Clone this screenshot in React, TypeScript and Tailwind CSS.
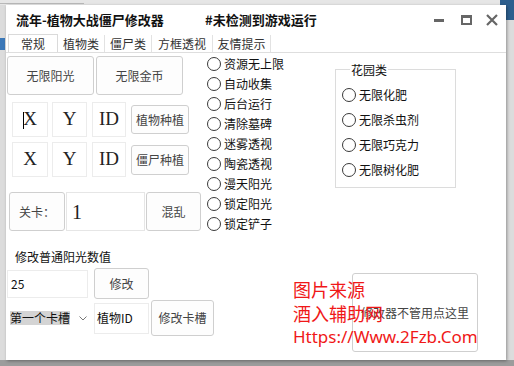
import React from "react";

const cjk = { fontFamily: '"Noto Sans CJK SC", "Noto Sans", sans-serif' };

function Btn({ children, className = "" }: { children: React.ReactNode; className?: string }) {
  return (
    <div
      className={
        "flex shrink-0 items-center justify-center rounded-[3px] border border-[#cfcfcf] bg-[#fdfdfd] text-[12px] text-[#444] " +
        className
      }
    >
      {children}
    </div>
  );
}

function Box({ children, className = "" }: { children: React.ReactNode; className?: string }) {
  return (
    <div
      className={"flex shrink-0 items-center justify-center border border-[#ececec] bg-white text-[19px] text-[#222] " + className}
      style={{ fontFamily: '"Liberation Serif", serif' }}
    >
      {children}
    </div>
  );
}

function Radio({ label, h = 20 }: { label: string; h?: number }) {
  return (
    <div className="flex items-center gap-[3px]" style={{ height: h }}>
      <div className="h-[14px] w-[14px] rounded-full border border-[#3a3a3a] bg-white" />
      <span className="text-[12px] leading-none text-[#111]">{label}</span>
    </div>
  );
}

export default function App() {
  const radios = ["资源无上限", "自动收集", "后台运行", "清除墓碑", "迷雾透视", "陶瓷透视", "漫天阳光", "锁定阳光", "锁定铲子"];
  const garden = ["无限化肥", "无限杀虫剂", "无限巧克力", "无限树化肥"];
  return (
    <div className="relative h-[366px] w-[514px] overflow-hidden bg-[#dcdcdc]" style={cjk}>
      {/* background bits */}
      <div className="absolute left-0 top-0 h-[5px] w-[514px] bg-[#e6e6e6]" />
      <div className="absolute left-0 top-[3px] h-[1px] w-[84px] bg-[#b8b8b8]" />
      <div className="absolute right-0 top-0 h-[20px] w-[14px] bg-[#2d5f8e]" />
      <div className="absolute left-0 top-[38px] h-[12px] w-[5px] bg-[#3b78b8]" />
      <div className="absolute bottom-0 left-0 h-[6px] w-[514px] bg-[#9c9c9c]" />

      <div className="ml-[6px] pt-[5px]">
        <div className="relative flex h-[355px] w-[500px] flex-col bg-white shadow-[1px_1px_3px_rgba(0,0,0,0.35)]">
          {/* title bar */}
          <div className="flex h-[30px] items-center pl-[10px]">
            <div className="w-[189px] text-[13px] font-bold text-[#111]">流年-植物大战僵尸修改器</div>
            <div className="text-[13px] font-bold text-[#111]">#未检测到游戏运行</div>
            <div className="ml-auto flex items-center pr-[8px]">
              <div className="h-[3px] w-[10px] bg-[#666]" />
              <div className="ml-[17px] h-[10px] w-[11px] border-[2px] border-[#666] border-t-[3px]" />
              <svg className="ml-[14px]" width="12" height="12" viewBox="0 0 12 12">
                <path d="M1 1 L11 11 M11 1 L1 11" stroke="#666" strokeWidth="2.2" />
              </svg>
            </div>
          </div>

          {/* tabs */}
          <div className="flex h-[18px] items-end border-b border-[#dedede] pl-[2px] text-[12px] text-[#333]">
            <div className="flex h-[18px] w-[50px] items-center justify-center border border-b-0 border-[#dadada] bg-white">常规</div>
            <div className="flex h-[17px] w-[47px] items-center justify-center border-r border-[#e2e2e2]">植物类</div>
            <div className="flex h-[17px] w-[47px] items-center justify-center border-r border-[#e2e2e2]">僵尸类</div>
            <div className="flex h-[17px] w-[61px] items-center justify-center border-r border-[#e2e2e2]">方框透视</div>
            <div className="flex h-[17px] w-[58px] items-center justify-center border-r border-[#e2e2e2]">友情提示</div>
          </div>

          {/* content */}
          <div className="flex flex-1">
            {/* left column */}
            <div className="w-[201px] shrink-0 pl-[1px] pt-[3px]">
              <div className="flex gap-[2px]">
                <Btn className="h-[39px] w-[87px]">无限阳光</Btn>
                <Btn className="h-[39px] w-[87px]">无限金币</Btn>
              </div>
              <div className="mt-[7px] flex items-center pl-[5px]">
                <Box className="relative h-[35px] w-[36px]">
                  <span className="absolute left-[10px] top-[9px] h-[17px] w-[1px] bg-black" />
                  X
                </Box>
                <Box className="ml-[4px] h-[35px] w-[35px]">Y</Box>
                <Box className="ml-[5px] h-[35px] w-[34px]">ID</Box>
                <Btn className="ml-[5px] h-[29px] w-[58px]">植物种植</Btn>
              </div>
              <div className="mt-[5px] flex items-center pl-[5px]">
                <Box className="h-[35px] w-[36px]">X</Box>
                <Box className="ml-[4px] h-[35px] w-[35px]">Y</Box>
                <Box className="ml-[5px] h-[35px] w-[34px]">ID</Box>
                <Btn className="ml-[5px] h-[30px] w-[58px]">僵尸种植</Btn>
              </div>
              <div className="mt-[15px] flex pl-[2px]">
                <Btn className="h-[39px] w-[56px]">关卡：</Btn>
                <div
                  className="ml-[1px] flex h-[39px] w-[79px] shrink-0 items-center border border-[#e6e6e6] pl-[5px] text-[20px] text-[#222]"
                  style={{ fontFamily: '"Liberation Serif", serif' }}
                >
                  1
                </div>
                <Btn className="ml-[1px] h-[39px] w-[55px]">混乱</Btn>
              </div>
              <div className="mt-[18px] pl-[8px] text-[12px] leading-[16px] text-[#111]">修改普通阳光数值</div>
              <div className="mt-[3px] flex items-center">
                <div className="flex h-[28px] w-[81px] shrink-0 items-center border border-[#ececec] pl-[3px] text-[12px] text-[#111]">25</div>
                <Btn className="ml-[6px] h-[31px] w-[55px]">修改</Btn>
              </div>
              <div className="mt-[1px] flex items-center">
                <div className="flex h-[31px] w-[87px] shrink-0 items-center pl-[3px]">
                  <span className="bg-[#d4d4d4] text-[12px] leading-[14px] text-[#111]">第一个卡槽</span>
                  <svg className="ml-[9px]" width="8" height="5" viewBox="0 0 8 5">
                    <path d="M0.5 0.5 L4 4 L7.5 0.5" stroke="#777" fill="none" strokeWidth="1" />
                  </svg>
                </div>
                <div className="flex h-[31px] w-[55px] shrink-0 items-center border border-[#ececec] pl-[2px] text-[12px] text-[#111]">植物ID</div>
                <Btn className="ml-[2px] h-[36px] w-[63px]">修改卡槽</Btn>
              </div>
            </div>

            {/* middle radios */}
            <div className="w-[128px] shrink-0 pt-[1px]">
              {radios.map((r) => (
                <Radio key={r} label={r} />
              ))}
            </div>

            {/* right column */}
            <div className="flex flex-col pt-[16px]">
              <div className="relative h-[119px] w-[121px] border border-[#dcdcdc] pl-[6px] pt-[12px]">
                <div className="absolute left-[14px] top-[-7px] bg-white px-[1px] text-[12px] leading-[13px] text-[#111]">花园类</div>
                {garden.map((g) => (
                  <Radio key={g} label={g} h={25} />
                ))}
              </div>
              <div className="ml-[17px] mt-[85px] flex h-[79px] w-[126px] items-center justify-center rounded-[3px] border border-[#cfcfcf] bg-white text-[12px] text-[#444]">
                修改器不管用点这里
              </div>
            </div>
          </div>
        </div>
      </div>

      {/* watermark overlay */}
      <div className="pointer-events-none absolute left-[293px] top-[277px] text-[18px] leading-[24px] text-[#f01818]">
        <div>图片来源</div>
        <div>酒入辅助网</div>
        <div className="text-[17px]" style={{ fontFamily: '"Noto Sans", sans-serif' }}>
          Https://Www.2Fzb.Com
        </div>
      </div>
    </div>
  );
}
